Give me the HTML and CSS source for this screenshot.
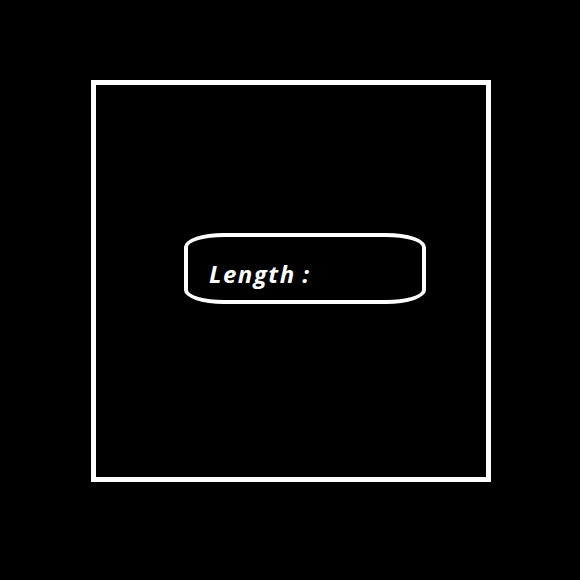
FILE: index.html
```html
<!DOCTYPE html>
<html>
<head>
<meta charset="utf-8">
<link rel="stylesheet" href="styles.css">
</head>
<body>
<div class="stage">
  <div class="frame">
    <div class="pill">
      <span class="label">Length :</span>
    </div>
  </div>
</div>
</body>
</html>
```

FILE: styles.css
```css
html, body {
  margin: 0;
  padding: 0;
  background: #000;
}
.stage {
  width: 580px;
  height: 580px;
  padding: 80px 0 0 91px;
  box-sizing: border-box;
}
.frame {
  width: 400px;
  height: 402px;
  border: 5px solid #fff;
  box-sizing: border-box;
  padding: 148px 0 0 88px;
}
.pill {
  width: 242px;
  height: 71px;
  border: 4px solid #fff;
  border-radius: 40px / 14px;
  box-sizing: border-box;
  padding: 24px 0 0 21px;
}
.label {
  display: block;
  font-family: "Open Sans", sans-serif;
  font-weight: 700;
  font-style: italic;
  font-size: 24px;
  line-height: 25px;
  letter-spacing: 1.5px;
  word-spacing: -1px;
  color: #fff;
  white-space: pre;
}
```
